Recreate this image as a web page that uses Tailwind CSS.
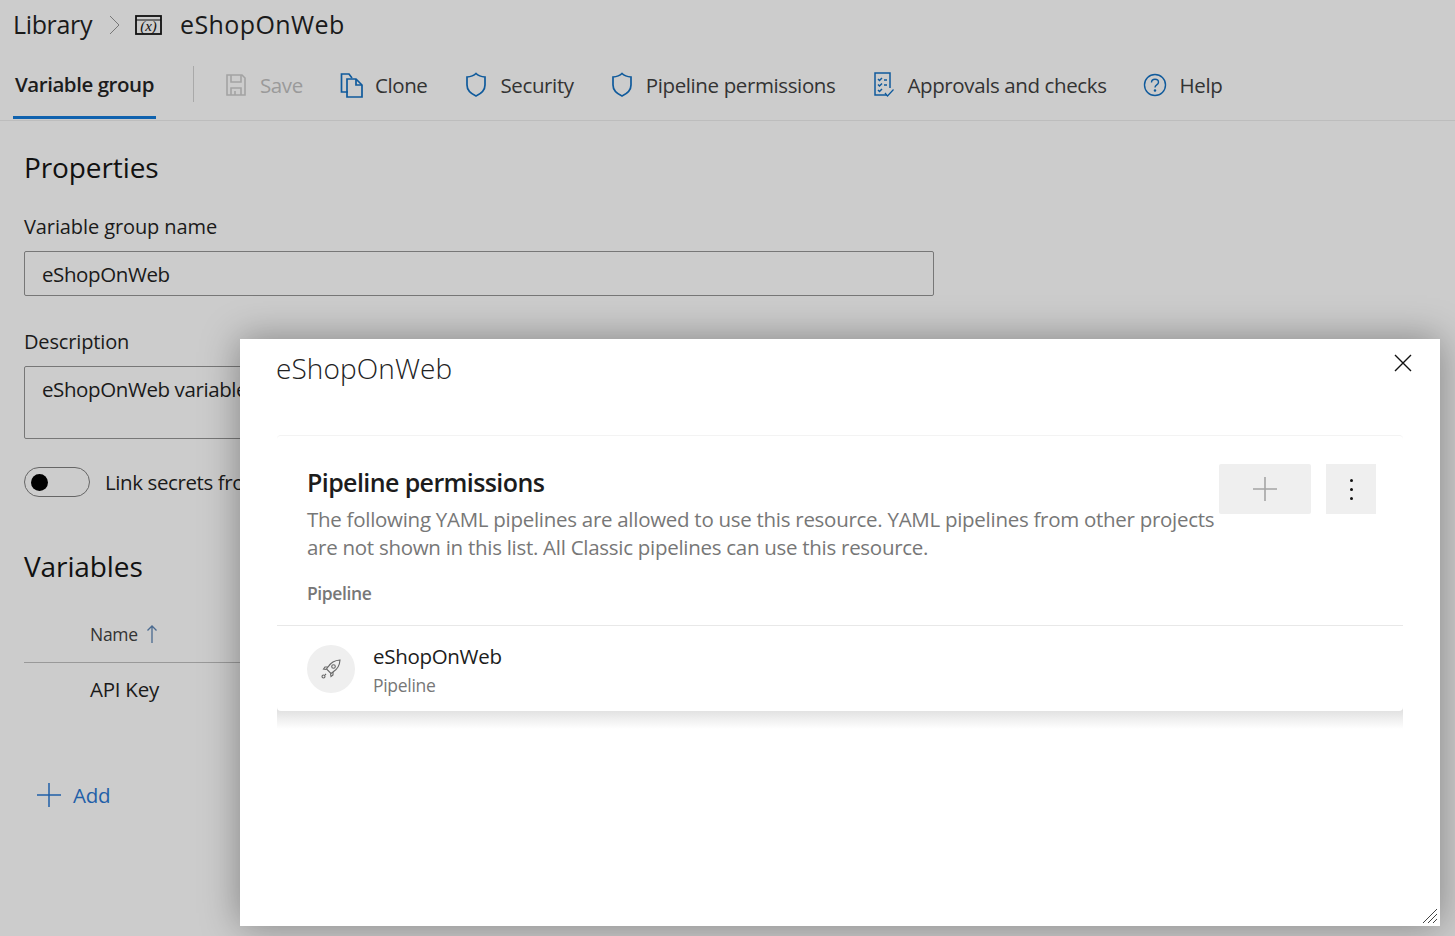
<!DOCTYPE html>
<html><head><meta charset="utf-8">
<script src="https://cdn.jsdelivr.net/npm/@tailwindcss/browser@4"></script>
</head>
<body class="m-0">
<div class="relative w-[1455px] h-[936px] overflow-hidden bg-[#cccccc] text-[#1a1a1a] font-['Open_Sans','Noto_Sans',sans-serif]">
  <div class="flex items-center h-[50px] pl-[13px] text-[25px]">
    <span class="tracking-[-0.35px]">Library</span>
    <svg class="ml-[17px] mr-[14px]" width="12" height="20" viewBox="0 0 12 20" fill="none" stroke="#777" stroke-width="1"><path d="M1 1l9 9-9 9"/></svg>
    <svg width="28" height="20" viewBox="0 0 28 20" fill="none" stroke="#111"><rect x="1" y="1" width="25" height="18" stroke-width="1.800"/><path d="M1 5h25" stroke-width="1"/><text x="13.500" y="16" font-size="15" font-style="italic" font-family="Liberation Serif" fill="#111" stroke="none" text-anchor="middle">(x)</text></svg>
    <span class="ml-[17px] tracking-[0.4px]">eShopOnWeb</span>
  </div>
  <div class="flex items-stretch h-[71px] border-b border-[#bdbdbd] pl-[13px] text-[20.5px] tracking-[-0.38px] text-[#333]">
    <div class="flex items-center w-[143px] pl-[2px] pt-[3px] font-semibold text-[#1c1c1c] border-b-[3px] border-[#0f62ae] h-[69px] tracking-[-0.45px]">Variable group</div>
    <div class="w-px h-[36px] bg-[#a9a9a9] mt-[16px] ml-[37px]"></div>
    <div class="flex items-center ml-[31px] h-[70px] text-[#9a9a9a]">
      <svg width="22" height="24" viewBox="0 0 22 24" fill="none" stroke="#a3a3a3" stroke-width="1.600"><path d="M2 2h15l3 3v17H2z"/><path d="M6 2v7h10V2M6 22v-7h10v7M10 22v-4"/></svg>
      <span class="ml-[13px]">Save</span>
    </div>
    <div class="flex items-center ml-[37px] h-[70px]">
      <svg width="24" height="26" viewBox="0 0 24 26" fill="none" stroke="#0f5a9c" stroke-width="1.700"><path d="M8 20H1.500V2H9l3 4"/><path d="M7 7h9l6 6v12H7z"/><path d="M16 7v6h6"/></svg>
      <span class="ml-[11px]">Clone</span>
    </div>
    <div class="flex items-center ml-[38px] h-[70px]">
      <svg width="22" height="26" viewBox="0 0 22 26" fill="none" stroke="#0f5a9c" stroke-width="1.700"><path d="M11 1.500c2.500 2.400 5.500 3.200 9 3.500v8c0 5-3.500 8.500-9 11-5.500-2.500-9-6-9-11V5c3.500-.3 6.500-1.100 9-3.500z"/></svg>
      <span class="ml-[13px]">Security</span>
    </div>
    <div class="flex items-center ml-[37px] h-[70px]">
      <svg width="22" height="26" viewBox="0 0 22 26" fill="none" stroke="#0f5a9c" stroke-width="1.700"><path d="M11 1.500c2.500 2.400 5.500 3.200 9 3.500v8c0 5-3.500 8.500-9 11-5.500-2.500-9-6-9-11V5c3.500-.3 6.500-1.100 9-3.500z"/></svg>
      <span class="ml-[13px]">Pipeline permissions</span>
    </div>
    <div class="flex items-center ml-[38px] h-[70px]">
      <svg width="22" height="26" viewBox="0 0 22 26" fill="none" stroke="#0f5a9c" stroke-width="1.500"><path d="M14 23H2V1h15v15"/><path d="M5 7l1.500 1.500L9 6M5 12.500l1.500 1.500L9 11.500M5 18l1.500 1.500L9 17M11 8h3M11 13h3"/><path d="M12 21l2.500 3 6-6.500" stroke-width="1.200"/></svg>
      <span class="ml-[12px]">Approvals and checks</span>
    </div>
    <div class="flex items-center ml-[36px] h-[70px]">
      <svg width="24" height="24" viewBox="0 0 24 24" fill="none" stroke="#0f5a9c" stroke-width="1.400"><circle cx="12" cy="12" r="10.500"/><path d="M8.500 9.500c0-2 1.500-3.300 3.500-3.300s3.500 1.300 3.500 3c0 2.600-3.500 2.800-3.500 5.300"/><circle cx="12" cy="17.500" r=".6"/></svg>
      <span class="ml-[13px]">Help</span>
    </div>
  </div>

  <div class="pl-[24px] tracking-[-0.3px]">
    <h2 class="text-[28px] leading-[38px] mt-[27px] tracking-[-0.1px] text-[#111]">Properties</h2>
    <div class="text-[20px] leading-[28px] mt-[27px] tracking-[-0.1px]">Variable group name</div>
    <div class="mt-[10px] w-[910px] h-[45px] border border-[#777] rounded-[2px] flex items-center pl-[17px] pt-[1px] text-[20.5px] tracking-[-0.4px]">eShopOnWeb</div>
    <div class="text-[20px] leading-[28px] mt-[32px] tracking-[-0.15px]">Description</div>
    <div class="mt-[10px] w-[910px] h-[73px] border border-[#777] rounded-[2px] pl-[17px] pt-[7px] text-[20.5px] tracking-[-0.4px]">eShopOnWeb variable group</div>
    <div class="flex items-center mt-[28px]">
      <div class="w-[66px] h-[30px] rounded-full border border-[#666] flex items-center pl-[6px]"><span class="w-[17px] h-[17px] rounded-full bg-black"></span></div>
      <span class="ml-[15px] text-[20.5px] tracking-[-0.4px]">Link secrets from an Azure key vault as variables</span>
    </div>
    <h2 class="text-[28px] leading-[38px] mt-[49px] tracking-[-0.1px] text-[#111]">Variables</h2>
    <div class="w-[1000px] h-[57px] mt-[21px] pl-[66px] flex items-center border-b border-[#999] text-[17.5px] text-[#333] pt-[1px]">
      <span>Name</span>
      <svg class="ml-[8px]" width="12" height="20" viewBox="0 0 12 20" fill="none" stroke="#4a6a90" stroke-width="1.300"><path d="M6 19V2M1.500 6.500L6 2l4.500 4.500"/></svg>
    </div>
    <div class="pl-[66px] mt-[11px] text-[20.5px] leading-[30px] tracking-[-0.25px]">API Key</div>
    <div class="flex items-center mt-[76px] ml-[13px] text-[#1f5fa8] text-[20.5px]">
      <svg width="24" height="24" viewBox="0 0 24 24" fill="none" stroke="#1f5fa8" stroke-width="1.500"><path d="M12 0v24M0 12h24"/></svg>
      <span class="ml-[12px]">Add</span>
    </div>
  </div>

  <div class="absolute left-[240px] top-[339px] w-[1200px] h-[587px] bg-white shadow-[0_0_36px_rgba(0,0,0,0.36)]">
    <div class="absolute left-[36px] top-[9px] text-[28px] leading-[40px] font-light tracking-[0.1px] text-[#222]">eShopOnWeb</div>
    <svg class="absolute left-[1154px] top-[15px]" width="18" height="18" viewBox="0 0 18 18" fill="none" stroke="#111" stroke-width="1.400"><path d="M1 1l16 16M17 1L1 17"/></svg>

    <div class="absolute left-[37px] top-[96px] w-[1126px] h-[276px] rounded-[4px] bg-white border-t border-[#f3f3f3]">
      <div class="absolute left-0 right-0 top-[calc(100%-4px)] h-[22px] bg-gradient-to-b from-[#dcdcdc] to-white"></div>
      <div class="relative flex pl-[30px] pt-[29px]">
        <div class="w-[912px]">
          <h3 class="text-[25px] leading-[38px] font-semibold tracking-[-0.6px] text-[#1c1c1c] -mt-[2px]">Pipeline permissions</h3>
          <p class="text-[20.5px] leading-[28px] text-[#777] mt-[4px] tracking-[-0.28px]">The following YAML pipelines are allowed to use this resource. YAML pipelines from other projects are not shown in this list. All Classic pipelines can use this resource.</p>
        </div>
        <div class="flex gap-[15px] h-[50px] -mt-[1px]">
          <div class="w-[92px] h-[50px] rounded-[2px] bg-[#efefef] flex items-center justify-center">
            <svg width="26" height="26" viewBox="0 0 26 26" fill="none" stroke="#a5a5a5" stroke-width="1.600"><path d="M13 1v24M1 13h24"/></svg>
          </div>
          <div class="w-[50px] h-[50px] bg-[#efefef] flex flex-col items-center justify-center gap-[6px]">
            <span class="w-[3px] h-[3px] rounded-full bg-[#111]"></span>
            <span class="w-[3px] h-[3px] rounded-full bg-[#111]"></span>
            <span class="w-[3px] h-[3px] rounded-full bg-[#111]"></span>
          </div>
        </div>
      </div>
      <div class="relative pl-[30px] mt-[20px] text-[17.5px] leading-[24px] font-semibold text-[#777] tracking-[-0.4px]">Pipeline</div>
      <div class="relative h-[86px] mt-[20px] border-t border-[#e8e8e8] bg-white rounded-b-[4px] flex items-center pl-[30px]">
        <div class="w-[48px] h-[48px] rounded-full bg-[#efefef] flex items-center justify-center">
          <svg width="20" height="20" viewBox="0 0 20 20" fill="none" stroke="#666" stroke-width="1.100"><path d="M19 1c-5 .3-9 2-12 7L5.500 10l4.500 4.500 2-1.500c5-3 6.700-7 7-12z"/><circle cx="12.500" cy="7.500" r="1.800"/><path d="M7 8H4l-1.500 2 3 .5M12 13v3l-2 1.500-.5-3"/><circle cx="2.500" cy="17.500" r="1.500"/><path d="M5 15l-1 1"/></svg>
        </div>
        <div class="ml-[18px] mt-[4px]">
          <div class="text-[20.5px] leading-[29px] text-[#1c1c1c] tracking-[-0.3px]">eShopOnWeb</div>
          <div class="text-[17.5px] leading-[29px] text-[#777] tracking-[-0.3px]">Pipeline</div>
        </div>
      </div>
    </div>

    <svg class="absolute right-[3px] bottom-[3px]" width="14" height="14" viewBox="0 0 14 14" fill="none" stroke="#444" stroke-width="1"><path d="M0 14L14 0M5 14l9-9M10 14l4-4"/></svg>
  </div>
</div>
</body></html>
